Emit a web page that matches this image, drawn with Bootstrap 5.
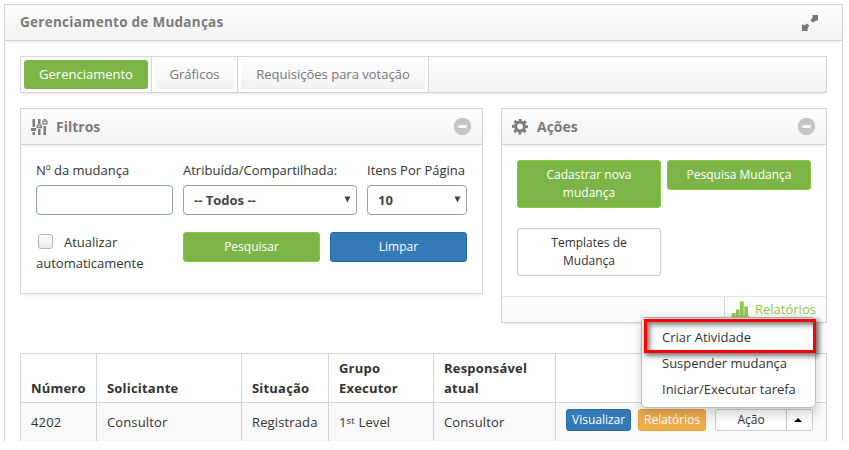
<!DOCTYPE html>
<html lang="pt-BR">
<head>
<meta charset="utf-8">
<title>Gerenciamento de Mudanças</title>
<link rel="stylesheet" href="https://cdn.jsdelivr.net/npm/bootstrap@5.3.0/dist/css/bootstrap.min.css">
<style>
body{font-family:"Open Sans","Noto Sans",sans-serif;font-size:13px;line-height:21px;color:#333;background:#fff}
.viewport{height:441px;overflow:hidden;padding:4px 0 0 4px}
.panel-box{border:1px solid #d5d5d5;background:#fff}
.shell{width:839px;height:500px}
.soft{box-shadow:0 4px 3px -3px rgba(0,0,0,.12)}
.bar{height:36px;padding:0 15px;border-bottom:1px solid #d5d5d5;background:linear-gradient(#fdfdfd,#f2f2f2);color:#7c7c7c;font-weight:700;font-size:14px;box-shadow:0 3px 2px -2px rgba(0,0,0,.1)}
.shell>.bar{font-size:13.5px;letter-spacing:.27px}
.panel-box .panel-box .bar{padding:0 10px}
.inner{padding:15px}
.tabs{height:37px;background:linear-gradient(#fdfdfd,#f1f1f1)}
.tab-cell{padding:3px;background:#fff;border-right:1px solid #d5d5d5}
.tab-cell a{display:block;height:29px;line-height:29px;color:#777;text-decoration:none;background:linear-gradient(#fdfdfd,#f2f2f2);text-align:center;white-space:nowrap}
.tab-cell a.on{background:#7cb547;color:#fff;border-radius:3px}
.panels{margin-top:15px}
.filters{width:463px;height:186px}
.actions{width:326px;height:215px}
.body-pad{padding:15px}
.field{height:30px;border:1px solid #95a5a0;border-radius:4px;background:#fff;font-weight:700;color:#444;padding:0 9px 0 10px;width:100%;font-size:13px}
.field svg{margin-right:-4px;margin-top:-2px}
.field-label{white-space:nowrap;margin-bottom:4px;height:21px}
.second{margin-top:17px}
.btn{--bs-btn-font-size:12px;--bs-btn-line-height:18px;--bs-btn-padding-y:5px;--bs-btn-padding-x:12px;--bs-btn-border-radius:3px}
.btn-green{--bs-btn-bg:#7cb547;--bs-btn-color:#fff;--bs-btn-border-color:#85c744}
.btn-blue{--bs-btn-bg:#337ab7;--bs-btn-color:#fff;--bs-btn-border-color:#2e6da4}
.btn-orange{--bs-btn-bg:#f0ad4e;--bs-btn-color:#fff;--bs-btn-border-color:#eea236}
.btn-plain{--bs-btn-bg:#fff;--bs-btn-color:#333;--bs-btn-border-color:#ccc}
.tiny{--bs-btn-padding-y:1px;--bs-btn-padding-x:5px;height:22px}
.tick{width:15px;height:15px;border:1px solid #b4b4b4;border-radius:3px;background:linear-gradient(#fff,#e8e8e8);display:inline-block;vertical-align:-2px;margin:0 11px 0 2px}
.foot{height:26px;border-top:1px solid #e5e5e5;background:#fafafa}
.foot a{width:102px;border-left:1px solid #d5d5d5;color:#8fc454;text-decoration:none;padding-left:6px}
.changes{width:807px;table-layout:fixed;border-collapse:collapse;margin-top:30px}
.changes th,.changes td{border:1px solid #d5d5d5;padding:4px 10px}
.changes th{height:49px;line-height:20px;vertical-align:bottom;letter-spacing:.2px}
.changes td{background:#f9f9f9;height:60px;vertical-align:top;padding-top:9px;letter-spacing:.13px}
.changes td:last-child{padding-top:6px;letter-spacing:0}
.sup-st{font-size:9.75px;position:relative;top:-3px}
.popmenu{position:absolute;left:641px;top:317px;width:175px;height:91px;background:#fff;border:1px solid #bbb;border-radius:5px;box-shadow:0 6px 12px rgba(0,0,0,.18);padding:6px 0 0 20px;line-height:26px}
.frame{position:absolute;left:644px;top:319px;width:172px;height:34px;border:3px solid #f00;box-shadow:2px 2px 5px 1px rgba(0,0,0,.55),inset 3px 3px 5px rgba(0,0,0,.5)}
</style>
<script src="https://cdn.jsdelivr.net/npm/bootstrap@5.3.0/dist/js/bootstrap.bundle.min.js"></script>
</head>
<body>
<div class="viewport">
<main class="panel-box shell">
  <header class="bar d-flex align-items-center justify-content-between">
    <span>Gerenciamento de Mudanças</span>
    <svg width="18" height="18" viewBox="0 0 18 18" fill="#777" class="me-2"><path d="M11.500 1H17v5.500H15.500L11.800 8.500 9.500 6.500 11.500 3.500zM1 10.500h1.500L3.500 11.500 6 9.500 8.300 11.500 6.500 14.500V17H1z"/></svg>
  </header>
  <div class="inner">
    <nav class="tabs panel-box soft d-flex">
      <div class="tab-cell" style="width:131px"><a class="on" href="#">Gerenciamento</a></div>
      <div class="tab-cell" style="width:86px"><a href="#">Gráficos</a></div>
      <div class="tab-cell" style="width:191px"><a href="#">Requisições para votação</a></div>
    </nav>
    <div class="d-flex justify-content-between align-items-start panels">
      <section class="panel-box filters soft">
        <div class="bar d-flex align-items-center">
          <svg width="17" height="18" viewBox="0 0 17 18" fill="#7c7c7c"><path d="M1.500 1h2.500v8H1.500zM0 10h5v3H0zM1.500 14h2.500v3H1.500zM7 1h2.500v5H7zM7 11h2.500v6H7zM12.500 1h2.500v1.500h-2.500zM12.500 8h2.500v9h-2.500z"/><path d="M6.300 7.200h4v2.300h-4zM11.900 3.200h4v2.600h-4z" fill="#fff" stroke="#7c7c7c" stroke-width="1.300"/></svg>
          <span class="ms-2">Filtros</span>
          <svg class="ms-auto" width="18" height="18" viewBox="0 0 18 18"><circle cx="8.500" cy="8.500" r="8.700" fill="#c6c6c6"/><path d="M4.500 7h8v3h-8z" fill="#fff"/></svg>
        </div>
        <div class="body-pad">
          <div class="d-flex" style="gap:10px">
            <div style="width:137px"><div class="field-label">Nº da mudança</div><div class="field"></div></div>
            <div style="width:174px"><div class="field-label">Atribuída/Compartilhada:</div><div class="field d-flex align-items-center justify-content-between">-- Todos --<svg width="7" height="7" viewBox="0 0 7 7"><path d="M.5 .5h6L3.500 6.500z" fill="#444"/></svg></div></div>
            <div style="width:100px"><div class="field-label">Itens Por Página</div><div class="field d-flex align-items-center justify-content-between">10<svg width="7" height="7" viewBox="0 0 7 7"><path d="M.5 .5h6L3.500 6.500z" fill="#444"/></svg></div></div>
          </div>
          <div class="d-flex second" style="gap:10px">
            <div style="width:137px"><span class="tick"></span>Atualizar automaticamente</div>
            <button class="btn btn-green" style="width:137px;height:30px">Pesquisar</button>
            <button class="btn btn-blue" style="width:137px;height:30px">Limpar</button>
          </div>
        </div>
      </section>
      <section class="panel-box actions soft d-flex flex-column">
        <div class="bar d-flex align-items-center">
          <svg width="16" height="16" viewBox="0 0 16 16"><g fill="none" stroke="#7c7c7c"><circle cx="8" cy="7.500" r="4.500" stroke-width="3"/><circle cx="8" cy="7.500" r="6.800" stroke-width="2.400" stroke-dasharray="2.900 2.441" stroke-dashoffset="1.450"/></g></svg>
          <span style="margin-left:9px">Ações</span>
          <svg class="ms-auto" width="18" height="18" viewBox="0 0 18 18"><circle cx="8.500" cy="8.500" r="8.700" fill="#c6c6c6"/><path d="M4.500 7h8v3h-8z" fill="#fff"/></svg>
        </div>
        <div class="body-pad d-flex flex-wrap align-items-start align-content-start flex-grow-1" style="gap:20px 6px">
          <button class="btn btn-green" style="width:144px">Cadastrar nova<br>mudança</button>
          <button class="btn btn-green" style="width:144px">Pesquisa Mudança</button>
          <button class="btn btn-plain" style="width:144px">Templates de<br>Mudança</button>
        </div>
        <div class="foot d-flex justify-content-end"><a href="#" class="d-flex align-items-center"><svg width="18" height="17" viewBox="0 0 18 17" fill="#8fc454"><path d="M0 15h18v1.300H0zM1 12h3.500v3.500H1zM5 8.500h3.500v7H5zM9 .5h3.700v15H9zM13.300 5.500h3.700v10h-3.700z"/></svg><span style="margin-left:6px">Relatórios</span></a></div>
      </section>
    </div>
    <table class="changes">
      <colgroup><col style="width:76px"><col style="width:145px"><col style="width:87px"><col style="width:105px"><col style="width:122px"><col></colgroup>
      <tr><th>Número</th><th>Solicitante</th><th>Situação</th><th>Grupo Executor</th><th>Responsável atual</th><th></th></tr>
      <tr><td>4202</td><td>Consultor</td><td>Registrada</td><td>1<span class="sup-st">st</span> Level</td><td>Consultor</td>
      <td><div class="d-flex"><button class="btn btn-blue tiny" style="width:65px">Visualizar</button><button class="btn btn-orange tiny" style="width:68px;margin-left:7px">Relatórios</button>
      <div class="btn-group" style="margin-left:9px"><button class="btn btn-plain tiny" style="width:72px">Ação</button><button class="btn btn-plain tiny d-flex align-items-center justify-content-center" style="width:27px"><svg class="me-1" width="8" height="4" viewBox="0 0 8 4"><path d="M0 4l4-4 4 4z"/></svg></button></div></div></td></tr>
    </table>
  </div>
</main>
</div>
<div class="popmenu"><div>Criar Atividade</div><div>Suspender mudança</div><div>Iniciar/Executar tarefa</div></div>
<div class="frame"></div>
</body>
</html>
